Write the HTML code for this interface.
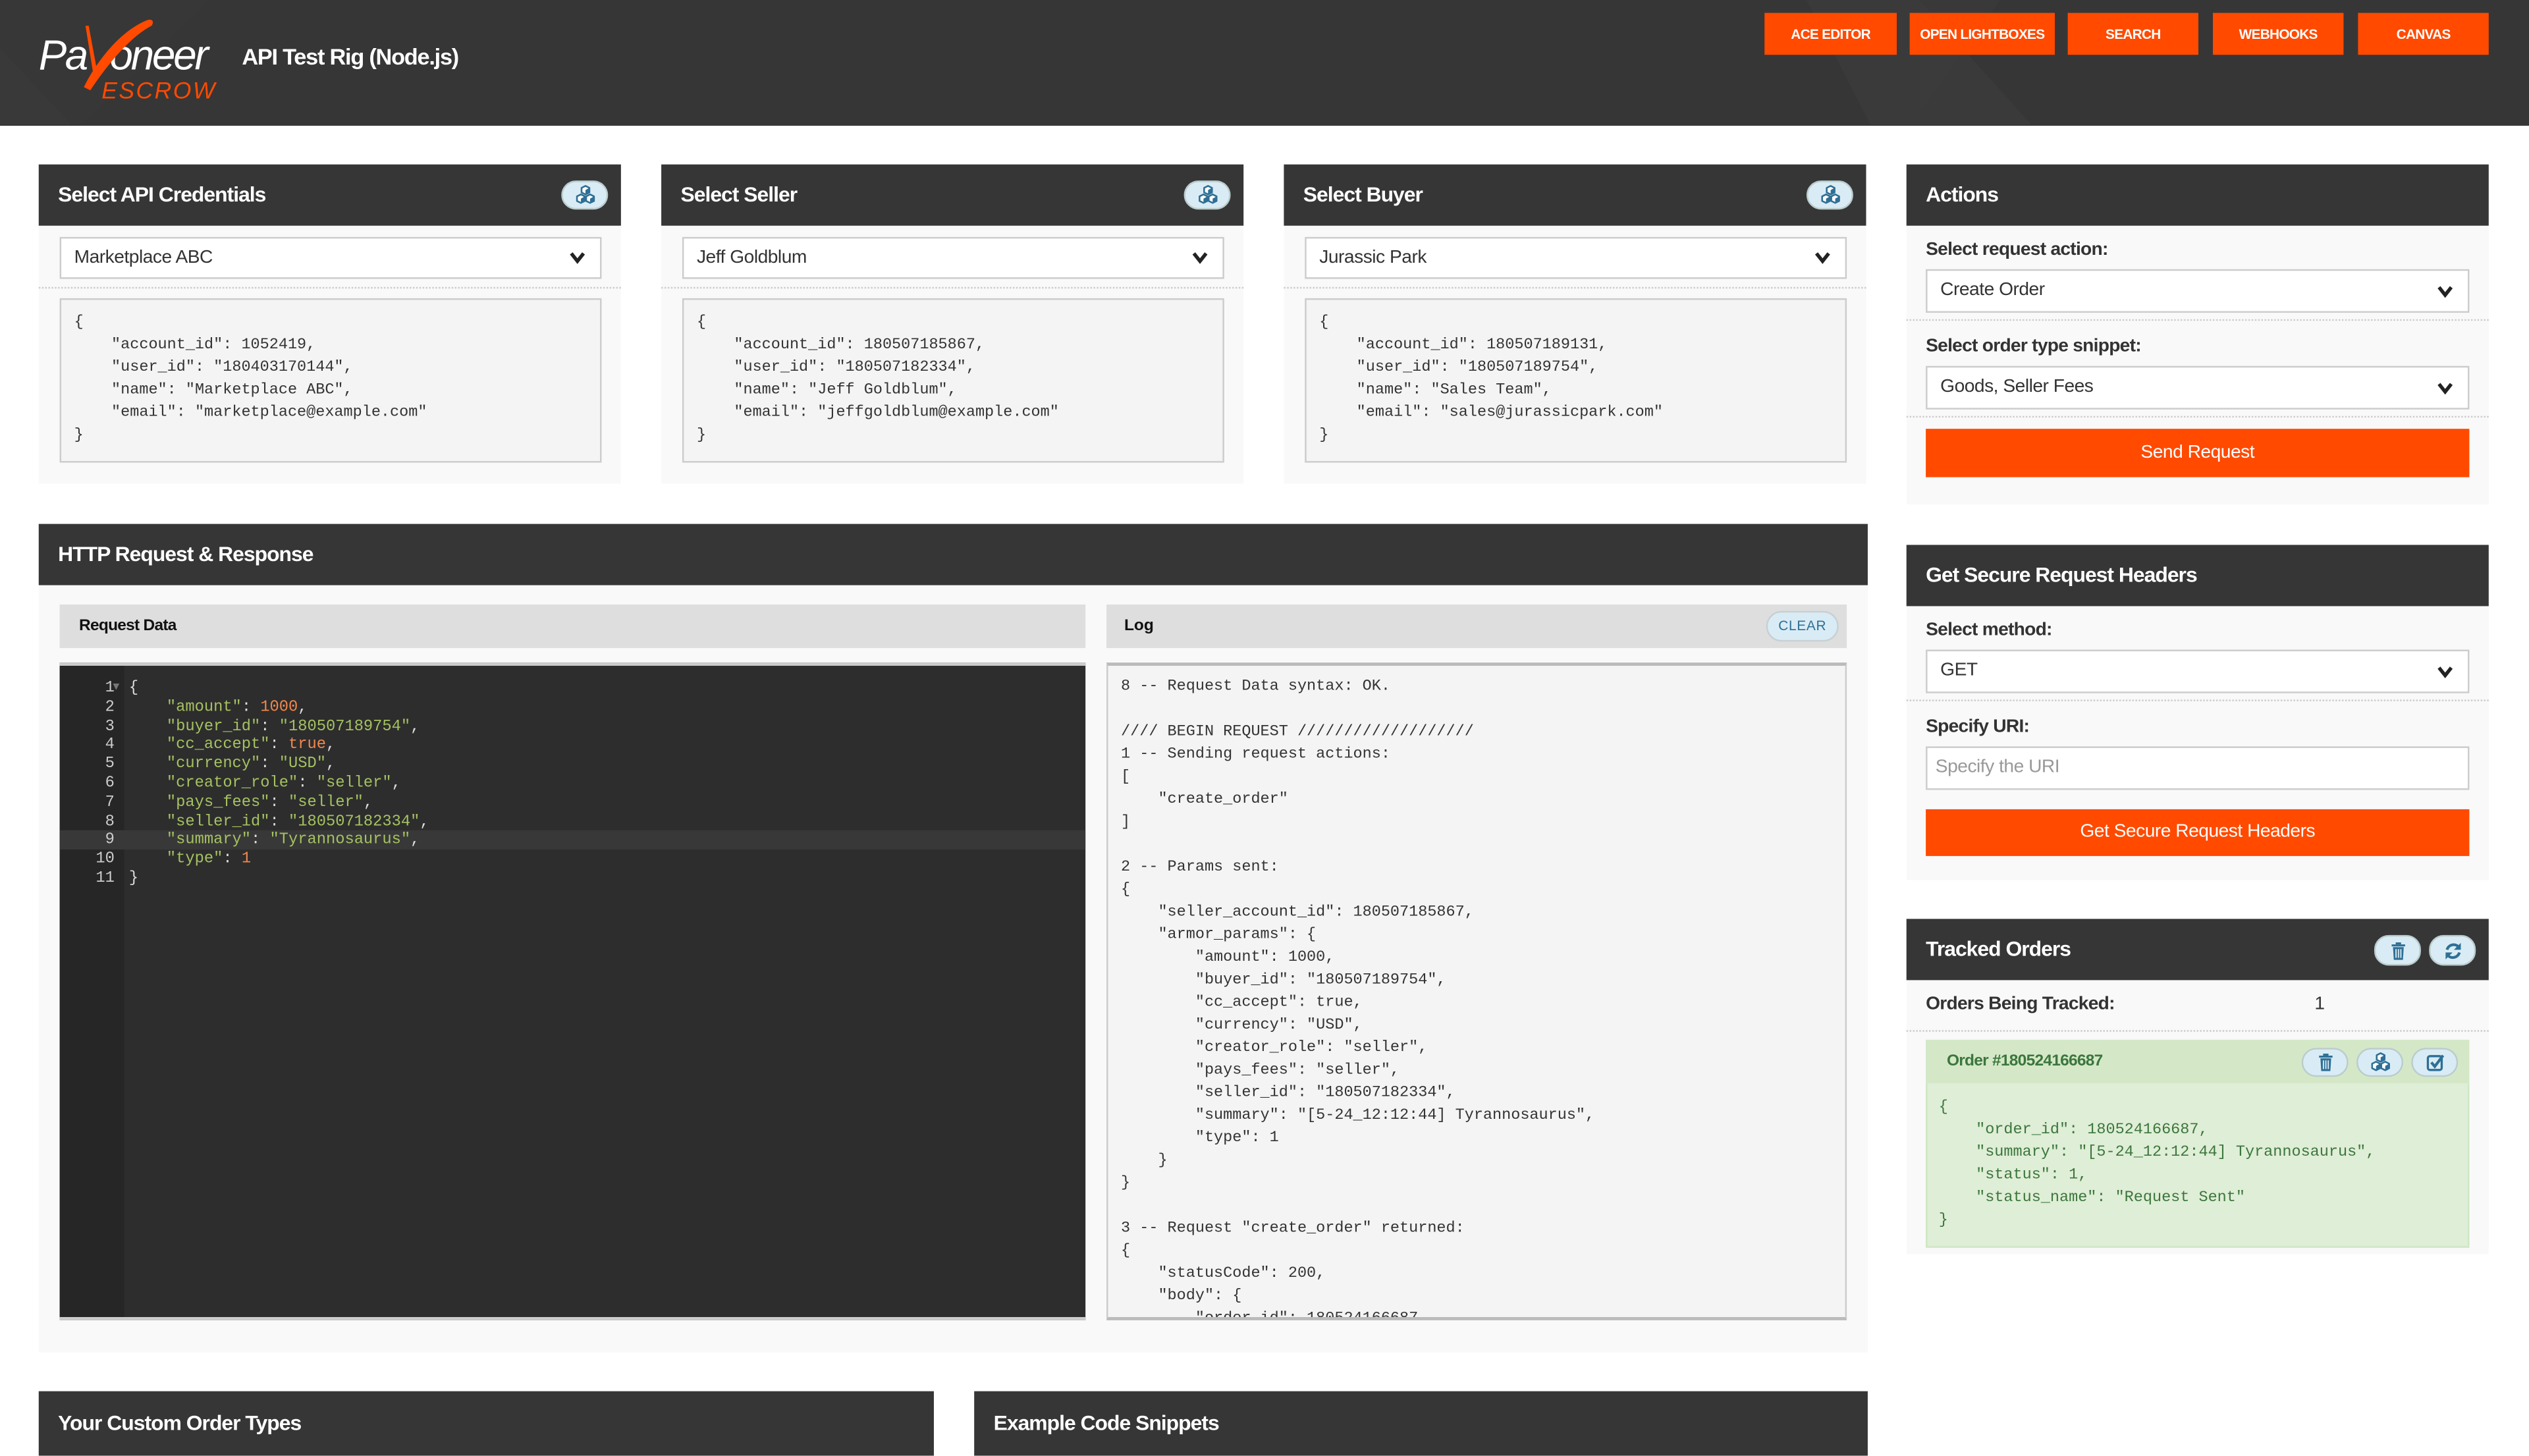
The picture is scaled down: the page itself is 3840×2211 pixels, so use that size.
<!DOCTYPE html>
<html><head><meta charset="utf-8">
<style>
*{box-sizing:border-box;margin:0;padding:0}
html,body{width:3840px;height:2208px;overflow:hidden;background:#fff}
#s{position:absolute;left:0;top:0;width:1568px;height:902px;transform:scale(2.449,2.448);transform-origin:0 0;font-family:"Liberation Sans",sans-serif;color:#333}
.a{position:absolute}
.hdr{background:#363636;color:#fff;font-weight:bold;font-size:13px;letter-spacing:-0.4px;padding-left:12px;line-height:38px}
.body{background:#f9f9f9}
.nav{position:absolute;top:8px;height:26px;background:#ff4a00;color:#fff;font-size:8.5px;font-weight:bold;text-align:center;line-height:26px;letter-spacing:-0.3px}
.sel{position:absolute;background:#fff;border:1px solid #ccc;font-size:11.5px;letter-spacing:-0.2px;color:#333;padding-left:8px}
.chev{position:absolute;right:9px;top:50%;margin-top:-4px;width:10px;height:8px}
.pre{position:absolute;background:#f4f4f4;border:1px solid #ccc;font-family:"Liberation Mono",monospace;font-size:9.6px;line-height:14px;color:#333;white-space:pre;padding:7px 0 0 8px}
.dot{position:absolute;border-top:1px dotted #ccc;height:0}
.lbl{position:absolute;font-size:11.5px;font-weight:bold;letter-spacing:-0.3px;color:#333}
.btn{position:absolute;background:#ff4a00;color:#fff;font-size:11.5px;text-align:center;letter-spacing:-0.2px}
.pill{position:absolute;background:#d9ecf5;border:1px solid #bcc;border-radius:9px;height:18px;width:29px}
.pill svg{position:absolute;left:50%;top:50%;transform:translate(-50%,-50%)}
.ed{font-family:"Liberation Mono",monospace;font-size:9.7px;line-height:11.8px;white-space:pre}
.k{color:#a5c261}.n{color:#f0884e}
</style></head><body>
<div id="s">
<!-- header -->
<div class="a" style="left:0;top:0;width:1568px;height:78px;background:#363636;overflow:hidden">
<svg class="a" style="left:0;top:0" width="1568" height="78"><polygon points="0,30 45,78 0,78" fill="#3a3a3a"/><polygon points="0,0 130,0 50,78 0,78" fill="#383838" opacity=".6"/><polygon points="1120,0 1190,0 1260,78 1160,78" fill="#3a3a3a"/><polygon points="1190,0 1240,0 1190,70" fill="#3c3c3c" opacity=".5"/></svg>
<div class="a" style="left:24px;top:18px;font-size:26px;line-height:32px;color:#fff;font-style:italic;letter-spacing:-1px">Pa</div>
<div class="a" style="left:68px;top:18px;font-size:26px;line-height:32px;color:#fff;font-style:italic;letter-spacing:-1.3px">oneer</div>
<svg class="a" style="left:50px;top:10px" width="50" height="50"><path d="M2 44 C10 28 24 10 40 3 C44 1 46 3 44 6 C32 12 18 28 6 46 Z" fill="#ff4a00"/><path d="M3 6 L5 6 L10 33 L8 37 Z" fill="#ff4a00"/></svg>
<div class="a" style="left:63px;top:49px;font-size:14.5px;line-height:17px;color:#ff4a00;font-style:italic;letter-spacing:1px">ESCROW</div>
<div class="a" style="left:150px;top:27px;font-size:14px;font-weight:bold;color:#fff;letter-spacing:-0.5px">API Test Rig (Node.js)</div>
<div class="nav" style="left:1094px;width:82px">ACE EDITOR</div>
<div class="nav" style="left:1184px;width:90px">OPEN LIGHTBOXES</div>
<div class="nav" style="left:1282px;width:81px">SEARCH</div>
<div class="nav" style="left:1372px;width:81px">WEBHOOKS</div>
<div class="nav" style="left:1462px;width:81px">CANVAS</div>
</div>

<svg width="0" height="0" style="position:absolute"><defs>
<symbol id="cubes" viewBox="0 0 16 16"><g fill="#fff" stroke="#2f6f95" stroke-width="1.3" stroke-linejoin="round"><path d="M8 1 L11 2.5 L11 6 L8 7.5 L5 6 L5 2.5Z"/><path d="M4.5 7.5 L7.5 9 L7.5 12.5 L4.5 14 L1.5 12.5 L1.5 9Z"/><path d="M11.5 7.5 L14.5 9 L14.5 12.5 L11.5 14 L8.5 12.5 L8.5 9Z"/></g><g fill="#2f6f95"><path d="M8 4.2 L11 2.5 L11 6 L8 7.5Z"/><path d="M4.5 10.7 L7.5 9 L7.5 12.5 L4.5 14Z"/><path d="M11.5 10.7 L14.5 9 L14.5 12.5 L11.5 14Z"/></g></symbol>
<symbol id="trash" viewBox="0 0 12 14"><g fill="#2f6f95"><rect x="1" y="2" width="10" height="1.5"/><rect x="4" y="0.5" width="4" height="1.5"/><path d="M2 4 H10 L9.4 13.5 H2.6Z"/></g><g fill="#d9ecf5"><rect x="3.8" y="5.5" width="0.9" height="6.5"/><rect x="5.6" y="5.5" width="0.9" height="6.5"/><rect x="7.4" y="5.5" width="0.9" height="6.5"/></g></symbol>
<symbol id="ref" viewBox="0 0 14 14"><g fill="none" stroke="#2f6f95" stroke-width="2"><path d="M2.5 6 A5 5 0 0 1 11 4"/><path d="M11.5 8 A5 5 0 0 1 3 10"/></g><path d="M12.5 1 V6 H7.5Z" fill="#2f6f95"/><path d="M1.5 13 V8 H6.5Z" fill="#2f6f95"/></symbol>
<symbol id="chk" viewBox="0 0 14 14"><rect x="1.5" y="2.5" width="10" height="10" rx="1.5" fill="none" stroke="#2f6f95" stroke-width="1.6"/><path d="M4 7 L6.5 10 L12.5 2" fill="none" stroke="#2f6f95" stroke-width="2"/></symbol>
<symbol id="chev" viewBox="0 0 10 8"><path d="M1.2 1.2 L5 6 L8.8 1.2" fill="none" stroke="#222" stroke-width="2.2"/></symbol>
</defs></svg>

<!-- Row 1 cards -->
<div class="a body" style="left:24px;top:102px;width:361px;height:198px"></div>
<div class="a hdr" style="left:24px;top:102px;width:361px;height:38px">Select API Credentials</div>
<div class="pill" style="left:348px;top:112px"><svg width="13" height="13"><use href="#cubes"/></svg></div>
<div class="sel" style="left:37px;top:147px;width:336px;height:26px;line-height:24px">Marketplace ABC<svg class="chev"><use href="#chev"/></svg></div>
<div class="dot" style="left:24px;top:178px;width:361px"></div>
<div class="pre" style="left:37px;top:185px;width:336px;height:102px">{
    "account_id": 1052419,
    "user_id": "180403170144",
    "name": "Marketplace ABC",
    "email": "marketplace@example.com"
}</div>

<div class="a body" style="left:410px;top:102px;width:361px;height:198px"></div>
<div class="a hdr" style="left:410px;top:102px;width:361px;height:38px">Select Seller</div>
<div class="pill" style="left:734px;top:112px"><svg width="13" height="13"><use href="#cubes"/></svg></div>
<div class="sel" style="left:423px;top:147px;width:336px;height:26px;line-height:24px">Jeff Goldblum<svg class="chev"><use href="#chev"/></svg></div>
<div class="dot" style="left:410px;top:178px;width:361px"></div>
<div class="pre" style="left:423px;top:185px;width:336px;height:102px">{
    "account_id": 180507185867,
    "user_id": "180507182334",
    "name": "Jeff Goldblum",
    "email": "jeffgoldblum@example.com"
}</div>

<div class="a body" style="left:796px;top:102px;width:361px;height:198px"></div>
<div class="a hdr" style="left:796px;top:102px;width:361px;height:38px">Select Buyer</div>
<div class="pill" style="left:1120px;top:112px"><svg width="13" height="13"><use href="#cubes"/></svg></div>
<div class="sel" style="left:809px;top:147px;width:336px;height:26px;line-height:24px">Jurassic Park<svg class="chev"><use href="#chev"/></svg></div>
<div class="dot" style="left:796px;top:178px;width:361px"></div>
<div class="pre" style="left:809px;top:185px;width:336px;height:102px">{
    "account_id": 180507189131,
    "user_id": "180507189754",
    "name": "Sales Team",
    "email": "sales@jurassicpark.com"
}</div>

<!-- Actions -->
<div class="a body" style="left:1182px;top:102px;width:361px;height:211px"></div>
<div class="a hdr" style="left:1182px;top:102px;width:361px;height:38px">Actions</div>
<div class="lbl" style="left:1194px;top:149px">Select request action:</div>
<div class="sel" style="left:1194px;top:167px;width:337px;height:27px;line-height:25px">Create Order<svg class="chev"><use href="#chev"/></svg></div>
<div class="dot" style="left:1182px;top:198px;width:361px"></div>
<div class="lbl" style="left:1194px;top:209px">Select order type snippet:</div>
<div class="sel" style="left:1194px;top:227px;width:337px;height:27px;line-height:25px">Goods, Seller Fees<svg class="chev"><use href="#chev"/></svg></div>
<div class="dot" style="left:1182px;top:258px;width:361px"></div>
<div class="btn" style="left:1194px;top:266px;width:337px;height:30px;line-height:30px">Send Request</div>

<!-- HTTP -->
<div class="a body" style="left:24px;top:325px;width:1134px;height:514px"></div>
<div class="a hdr" style="left:24px;top:325px;width:1134px;height:38px">HTTP Request &amp; Response</div>
<div class="a" style="left:37px;top:375px;width:636px;height:27px;background:#dedede;font-size:10px;font-weight:bold;line-height:27px;padding-left:12px;color:#111;letter-spacing:-0.3px">Request Data</div>
<div class="a" style="left:686px;top:375px;width:459px;height:27px;background:#dedede;font-size:10px;font-weight:bold;line-height:27px;padding-left:11px;color:#111">Log</div>
<div class="a" style="left:1095px;top:379px;width:45px;height:19px;border-radius:10px;background:#d9ecf5;border:1px solid #c8d0d4;color:#2f6f95;font-size:8.5px;text-align:center;line-height:17px;letter-spacing:.3px">CLEAR</div>

<div class="a" style="left:37px;top:411px;width:636px;height:408px;background:#2d2d2d;border-top:2px solid #ccc;border-bottom:2px solid #ccc;overflow:hidden">
<div class="a" style="left:0;top:0;width:40px;height:406px;background:#262626"></div>
<div class="a" style="left:0;top:102px;width:636px;height:11.8px;background:#383838"></div>
<div class="a ed" style="left:0;top:8px;width:34px;text-align:right;color:#ccc">1
2
3
4
5
6
7
8
9
10
11</div>
<div class="a" style="left:33px;top:11px;width:0;height:0;border-left:2.5px solid transparent;border-right:2.5px solid transparent;border-top:4px solid #777"></div>
<div class="a ed" style="left:43px;top:8px;color:#ddd">{
    <span class="k">"amount"</span>: <span class="n">1000</span>,
    <span class="k">"buyer_id"</span>: <span class="k">"180507189754"</span>,
    <span class="k">"cc_accept"</span>: <span class="n">true</span>,
    <span class="k">"currency"</span>: <span class="k">"USD"</span>,
    <span class="k">"creator_role"</span>: <span class="k">"seller"</span>,
    <span class="k">"pays_fees"</span>: <span class="k">"seller"</span>,
    <span class="k">"seller_id"</span>: <span class="k">"180507182334"</span>,
    <span class="k">"summary"</span>: <span class="k">"Tyrannosaurus"</span>,
    <span class="k">"type"</span>: <span class="n">1</span>
}</div>
</div>

<div class="pre" style="left:686px;top:411px;width:459px;height:408px;overflow:hidden;border-width:2px 1px 2px 1px;border-color:#bbb #ccc #bbb #ccc;padding-top:6px">8 -- Request Data syntax: OK.

//// BEGIN REQUEST ///////////////////
1 -- Sending request actions:
[
    "create_order"
]

2 -- Params sent:
{
    "seller_account_id": 180507185867,
    "armor_params": {
        "amount": 1000,
        "buyer_id": "180507189754",
        "cc_accept": true,
        "currency": "USD",
        "creator_role": "seller",
        "pays_fees": "seller",
        "seller_id": "180507182334",
        "summary": "[5-24_12:12:44] Tyrannosaurus",
        "type": 1
    }
}

3 -- Request "create_order" returned:
{
    "statusCode": 200,
    "body": {
        "order_id": 180524166687
</div>

<!-- Secure headers -->
<div class="a body" style="left:1182px;top:338px;width:361px;height:208px"></div>
<div class="a hdr" style="left:1182px;top:338px;width:361px;height:38px">Get Secure Request Headers</div>
<div class="lbl" style="left:1194px;top:385px">Select method:</div>
<div class="sel" style="left:1194px;top:403px;width:337px;height:27px;line-height:25px">GET<svg class="chev"><use href="#chev"/></svg></div>
<div class="dot" style="left:1182px;top:434px;width:361px"></div>
<div class="lbl" style="left:1194px;top:445px">Specify URI:</div>
<div class="sel" style="left:1194px;top:463px;width:337px;height:27px;line-height:25px;color:#999;padding-left:5px">Specify the URI</div>
<div class="btn" style="left:1194px;top:502px;width:337px;height:29px;line-height:29px">Get Secure Request Headers</div>

<!-- Tracked orders -->
<div class="a body" style="left:1182px;top:570px;width:361px;height:208px"></div>
<div class="a hdr" style="left:1182px;top:570px;width:361px;height:38px">Tracked Orders</div>
<div class="pill" style="left:1472px;top:580px;height:19px"><svg width="10" height="12"><use href="#trash"/></svg></div>
<div class="pill" style="left:1506px;top:580px;height:19px"><svg width="12" height="12"><use href="#ref"/></svg></div>
<div class="lbl" style="left:1194px;top:617px">Orders Being Tracked:</div>
<div class="a" style="left:1435px;top:617px;font-size:11.5px">1</div>
<div class="dot" style="left:1182px;top:639px;width:361px"></div>
<div class="a" style="left:1194px;top:645px;width:337px;height:129px;background:#dfeed6;border:1px solid #d0e6c4"></div>
<div class="a" style="left:1194px;top:645px;width:337px;height:27px;background:#d4e8c8"></div>
<div class="a" style="left:1207px;top:653px;font-size:10px;font-weight:bold;color:#3c763d;letter-spacing:-0.3px">Order #180524166687</div>
<div class="pill" style="left:1427px;top:650px;height:18px"><svg width="10" height="12"><use href="#trash"/></svg></div>
<div class="pill" style="left:1461px;top:650px;height:18px"><svg width="13" height="13"><use href="#cubes"/></svg></div>
<div class="pill" style="left:1495px;top:650px;height:18px"><svg width="12" height="12"><use href="#chk"/></svg></div>
<div class="a" style="left:1202px;top:680px;font-family:'Liberation Mono',monospace;font-size:9.6px;line-height:14px;color:#3c763d;white-space:pre">{
    "order_id": 180524166687,
    "summary": "[5-24_12:12:44] Tyrannosaurus",
    "status": 1,
    "status_name": "Request Sent"
}</div>

<!-- Bottom -->
<div class="a hdr" style="left:24px;top:863px;width:555px;height:40px;line-height:40px">Your Custom Order Types</div>
<div class="a hdr" style="left:604px;top:863px;width:554px;height:40px;line-height:40px">Example Code Snippets</div>
</div>
</body></html>
